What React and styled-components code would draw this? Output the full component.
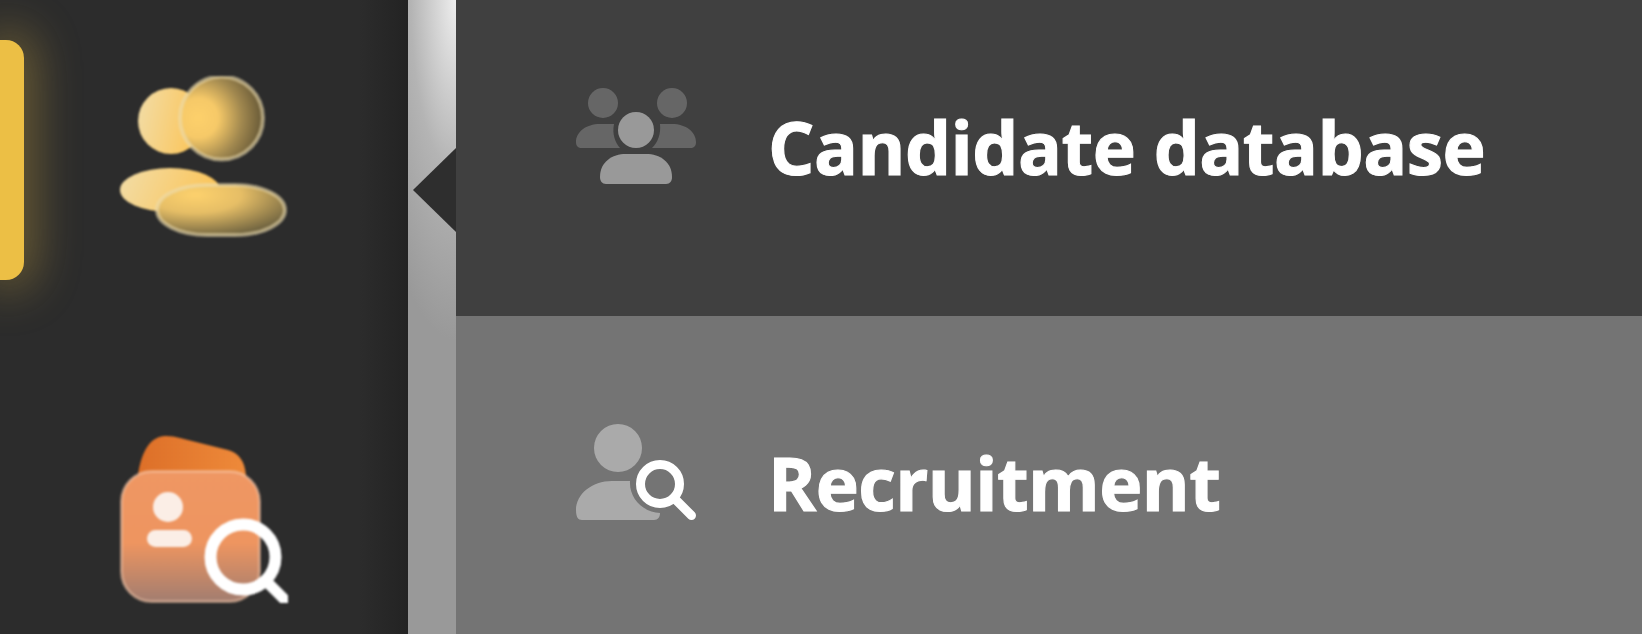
import styled, { createGlobalStyle } from "styled-components";

const GlobalStyle = createGlobalStyle`
html, body {
    margin: 0;
    padding: 0;
    background: #2b2b2b;
}
`;

function CoinsIcon() {
    return (
        <CoinsSvg viewBox="0 0 168 162">
            <defs>
                <linearGradient id="coinBack" x1="0" y1="0" x2="1" y2="0.2">
                    <stop offset="0" stopColor="#f2dda8" />
                    <stop offset="1" stopColor="#fbc55a" />
                </linearGradient>
                <radialGradient id="coinFront" cx="0.22" cy="0.5" r="0.85">
                    <stop offset="0" stopColor="#fdd06b" />
                    <stop offset="0.28" stopColor="#f6c968" />
                    <stop offset="0.62" stopColor="#a1884f" />
                    <stop offset="1" stopColor="#564b30" />
                </radialGradient>
                <radialGradient id="coinBody" cx="0.3" cy="0.2" r="0.85">
                    <stop offset="0" stopColor="#fdd16d" />
                    <stop offset="0.42" stopColor="#e6be66" />
                    <stop offset="1" stopColor="#6f6340" />
                </radialGradient>
            </defs>
            <circle cx="51" cy="45" r="33" fill="url(#coinBack)" />
            <ellipse cx="50" cy="114" rx="50" ry="22" fill="url(#coinBack)" />
            <circle cx="101.5" cy="42" r="41.5" fill="url(#coinFront)" stroke="#eddcae" strokeOpacity="0.6" strokeWidth="4" />
            <rect x="37" y="109" width="128" height="50" rx="50" ry="25" fill="url(#coinBody)" stroke="#eddcae" strokeOpacity="0.6" strokeWidth="4" />
        </CoinsSvg>
    );
}

function RecruitIcon() {
    return (
        <RecruitSvg viewBox="0 0 168 167">
            <defs>
                <linearGradient id="folderBack" x1="0" y1="0" x2="1" y2="0">
                    <stop offset="0" stopColor="#dd6f28" />
                    <stop offset="1" stopColor="#ee8a3a" />
                </linearGradient>
                <linearGradient id="folderFront" x1="0" y1="0" x2="0" y2="1">
                    <stop offset="0" stopColor="#ef9763" />
                    <stop offset="0.55" stopColor="#ee9560" />
                    <stop offset="1" stopColor="#a27d70" />
                </linearGradient>
            </defs>
            <path d="M18 40 C20 22 27 6 37 2 C43 -1 52 0 60 2 L108 14 C118 17 125 24 126 40 Z" fill="url(#folderBack)" />
            <rect x="1.5" y="35.5" width="138" height="130" rx="30" fill="url(#folderFront)" stroke="#f7c9ac" strokeOpacity="0.55" strokeWidth="3" />
            <circle cx="48" cy="71" r="15" fill="#fbeee6" />
            <rect x="27" y="94" width="45" height="17" rx="8.5" fill="#fbeee6" />
            <line x1="147" y1="146" x2="172" y2="171" stroke="#fff" strokeWidth="11" />
            <circle cx="123" cy="121" r="32.5" fill="none" stroke="#fff" strokeWidth="12" />
        </RecruitSvg>
    );
}

function GroupIcon() {
    return (
        <RowSvg viewBox="0 0 120 96">
            <g fill="#666666">
                <circle cx="27" cy="15" r="15" />
                <circle cx="96" cy="15" r="15" />
                <path d="M0 54 C0 44 10 36 24 36 L38 36 C36 46 39 54 44 60 L6 60 C2 60 0 58 0 54 Z" />
                <path d="M120 54 C120 44 110 36 96 36 L84 36 C85 46 82 54 76 60 L114 60 C118 60 120 58 120 54 Z" />
            </g>
            <g fill="#999999">
                <circle cx="60" cy="42" r="18" />
                <path d="M24 89 C24 74 36 66 50 66 L70 66 C84 66 96 74 96 89 C96 93 94 96 90 96 L30 96 C26 96 24 93 24 89 Z" />
            </g>
        </RowSvg>
    );
}

function SearchPersonIcon() {
    return (
        <RowSvg viewBox="0 0 120 96">
            <g fill="#aaaaaa">
                <circle cx="42" cy="24" r="24" />
                <path d="M0 86 C0 70 16 57 36 57 L54 57 C53 74 66 88 84 89 C84 93 82 96 78 96 L6 96 C2 96 0 93 0 86 Z" />
            </g>
            <circle cx="84" cy="60" r="19.5" fill="none" stroke="#fff" strokeWidth="9" />
            <line x1="98" y1="74" x2="115.5" y2="91.5" stroke="#fff" strokeWidth="9" strokeLinecap="round" />
        </RowSvg>
    );
}

function App() {
    return (
        <>
            <GlobalStyle />
            <Page>
                <Sidebar>
                    <NavItem $active>
                        <CoinsIcon />
                    </NavItem>
                    <NavItem>
                        <RecruitIcon />
                    </NavItem>
                </Sidebar>
                <Divider />
                <Menu>
                    <MenuRow $bg="#404040" $top={88} $height={316}>
                        <GroupIcon />
                        <RowLabel>Candidate database</RowLabel>
                    </MenuRow>
                    <MenuRow $bg="#747474" $top={108} $height={318}>
                        <SearchPersonIcon />
                        <RowLabel>Recruitment</RowLabel>
                    </MenuRow>
                </Menu>
            </Page>
        </>
    );
}

const Page = styled.div`
display: flex;
width: 1642px;
height: 634px;
overflow: hidden;
font-family: "Open Sans", sans-serif;
`;

const Sidebar = styled.nav`
width: 408px;
box-sizing: border-box;
padding: 76px 0 0 120px;
display: flex;
flex-direction: column;
gap: 198px;
background: linear-gradient(to right, #2c2c2c 0%, #2c2c2c 88%, #232323 100%);
`;

const NavItem = styled.div`
position: relative;
width: 168px;
${(props) => props.$active && `
    &::before {
        content: "";
        position: absolute;
        left: -120px;
        top: -36px;
        width: 24px;
        height: 240px;
        border-radius: 0 18px 18px 0;
        background: #ecbf45;
        box-shadow: 0 0 46px 10px rgba(236, 191, 69, 0.36);
    }
`}
`;

const CoinsSvg = styled.svg`
display: block;
width: 168px;
height: 162px;
filter: blur(0.9px);
`;

const RecruitSvg = styled.svg`
display: block;
width: 168px;
height: 167px;
filter: blur(0.9px);
`;

const Divider = styled.div`
position: relative;
width: 48px;
background: radial-gradient(ellipse 90px 340px at 100% 0, #eeeeee 0%, #b4b4b4 50%, #999999 100%);
&::after {
    content: "";
    position: absolute;
    right: 0;
    top: 148px;
    width: 43px;
    height: 84px;
    background: #2e2e2e;
    clip-path: polygon(100% 0, 0 50%, 100% 100%);
}
`;

const Menu = styled.div`
flex: 1;
display: flex;
flex-direction: column;
`;

const MenuRow = styled.div`
height: ${(props) => props.$height}px;
box-sizing: border-box;
padding: ${(props) => props.$top}px 0 0 120px;
display: flex;
align-items: flex-start;
gap: 72px;
background: ${(props) => props.$bg};
`;

const RowSvg = styled.svg`
display: block;
width: 120px;
height: 96px;
flex-shrink: 0;
`;

const RowLabel = styled.span`
margin-top: 11px;
font-size: 73px;
font-weight: 700;
letter-spacing: -0.55px;
-webkit-text-stroke: 1.1px #ffffff;
line-height: 96px;
color: #ffffff;
white-space: nowrap;
`;

export default App;
